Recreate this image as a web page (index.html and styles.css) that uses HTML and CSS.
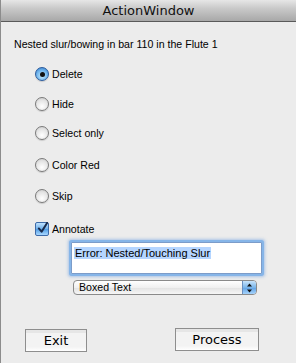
FILE: index.html
```html
<!DOCTYPE html>
<html>
<head>
<meta charset="utf-8">
<link rel="stylesheet" href="styles.css">
</head>
<body>
<div class="window">
  <div class="titlebar">ActionWindow</div>
  <div class="content">
    <div class="message">Nested slur/bowing in bar 110 in the Flute 1</div>
    <div class="options">
      <div class="opt o1"><span class="radio on"><span class="dot"></span></span><span>Delete</span></div>
      <div class="opt o2"><span class="radio"></span><span>Hide</span></div>
      <div class="opt o3"><span class="radio"></span><span>Select only</span></div>
      <div class="opt o4"><span class="radio"></span><span>Color Red</span></div>
      <div class="opt o5"><span class="radio"></span><span>Skip</span></div>
      <div class="opt o6"><span class="check"><svg width="12" height="12" viewBox="0 0 12 12"><path d="M2 6.5 L5 10 L11 0.5" fill="none" stroke="#1a2a4a" stroke-width="2.2" stroke-linecap="round" stroke-linejoin="round"/></svg></span><span>Annotate</span></div>
    </div>
    <div class="textbox"><span class="sel">Error: Nested/Touching Slur</span></div>
    <div class="select"><span class="seltext">Boxed Text</span><span class="stepper"><svg width="7" height="10" viewBox="0 0 7 10"><path d="M3.5 0.5 L6 3.5 L1 3.5 Z M3.5 9.5 L6 6.5 L1 6.5 Z" fill="#111"/></svg></span></div>
    <div class="buttons">
      <div class="btn exit">Exit</div>
      <div class="btn process">Process</div>
    </div>
  </div>
</div>
</body>
</html>
```
FILE: styles.css
```css
html, body { margin: 0; padding: 0; }
body {
  width: 296px; height: 363px; overflow: hidden;
  background: #ececec;
  font-family: "Liberation Sans", "DejaVu Sans", sans-serif;
  color: #000;
}
.window {
  width: 296px; height: 363px;
  box-sizing: border-box;
  border-left: 1px solid #8c8c8c;
  display: flex; flex-direction: column;
}
.titlebar {
  height: 22px;
  box-sizing: border-box;
  border-bottom: 1px solid #5a5a5a;
  background: linear-gradient(#e6e6e6, #c9c9c9 40%, #a8a8a8);
  text-align: center;
  font-family: "DejaVu Sans", sans-serif;
  font-size: 13px;
  line-height: 22px;
  color: #111;
}
.content { flex: 1; padding: 0 0 0 13px; display: flex; flex-direction: column; }
.message { font-size: 10.6px; margin-top: 15px; height: 14px; line-height: 14px; }
.options { display: flex; flex-direction: column; margin-top: 15px; padding-left: 21px; }
.opt { display: flex; align-items: center; font-size: 10.6px; height: 16px; gap: 3px; }
.o2 { margin-top: 14px; }
.o3 { margin-top: 13px; }
.o4 { margin-top: 16px; }
.o5 { margin-top: 15px; }
.o6 { margin-top: 17px; }
.radio {
  width: 14px; height: 14px; border-radius: 50%;
  box-sizing: border-box;
  border: 1px solid #7a7a7a;
  background: radial-gradient(circle at 50% 70%, #ffffff, #e4e4e4 60%, #c4c4c4);
  box-shadow: 0 1px 1px rgba(0,0,0,0.15);
  display: flex; align-items: center; justify-content: center;
}
.radio.on {
  border-color: #2b5b9c;
  background: radial-gradient(circle at 50% 65%, #c8ecff, #6fb4ec 55%, #2d76c7);
}
.dot { width: 5px; height: 5px; border-radius: 50%; background: #111; }
.check {
  width: 14px; height: 14px; box-sizing: border-box;
  border: 1px solid #3d6aa8; border-radius: 2px;
  background: linear-gradient(#bfe2ff, #6fb0ea 50%, #4f9be3 51%, #a9d8ff);
  display: flex; align-items: center; justify-content: center;
}
.check svg { margin-top: -2px; margin-left: 1px; }
.textbox {
  margin-left: 57px; margin-top: 5px;
  width: 191px; height: 32px; box-sizing: border-box;
  background: #fff;
  border: 1px solid #7c9cc9;
  box-shadow: 0 0 0 2px #86b5e8, 0 0 3px 3px rgba(110,160,225,0.5);
  border-radius: 1px;
  padding: 3px 0 0 2px;
  font-size: 11px; line-height: 14px;
}
.sel { background: #b5d5ff; padding: 0 1px; }
.select {
  margin-left: 59px; margin-top: 6px;
  width: 184px; height: 15px; box-sizing: border-box;
  border: 1px solid #8a8a8a; border-radius: 4px;
  background: linear-gradient(#ffffff, #f0f0f0 50%, #e2e2e2 51%, #f6f6f6);
  display: flex; align-items: center; justify-content: space-between;
  font-size: 10.6px; overflow: hidden;
}
.seltext { padding-left: 5px; line-height: 13px; }
.stepper {
  width: 13px; height: 13px;
  background: linear-gradient(#c8e4fb, #7ab5ea 50%, #5fa1e4 51%, #a6d3fb);
  border-left: 1px solid #6a8fbf;
  display: flex; align-items: center; justify-content: center;
}
.buttons { display: flex; margin-top: 33px; align-items: flex-end; }
.btn {
  height: 23px; box-sizing: border-box;
  border: 1px solid #8e8e8e;
  background: linear-gradient(#e6e6e6, #e6e6e6 15%, #f3f3f3 16%, #f3f3f3 80%, #ffffff);
  display: flex; align-items: center; justify-content: center;
  font-size: 13px; font-family: "DejaVu Sans", sans-serif;
}
.exit { width: 62px; margin-left: 11px; }
.process { width: 84px; margin-left: 88px; margin-bottom: 1px; }
```
